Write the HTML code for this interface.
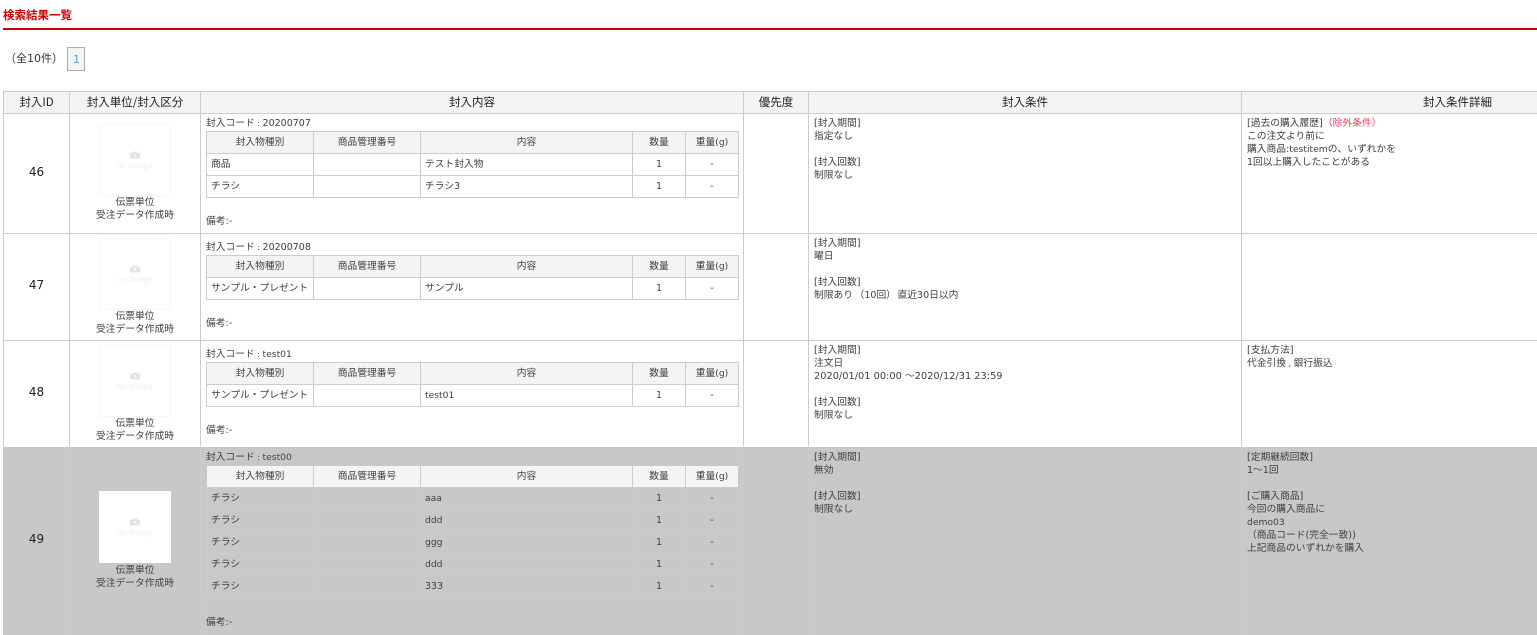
<!DOCTYPE html>
<html lang="ja">
<head>
<meta charset="utf-8">
<title>検索結果一覧</title>
<style>
html,body{margin:0;padding:0;width:1537px;height:635px;overflow:hidden;background:#fff}
body{position:relative;font-family:"DejaVu Sans","Noto Sans CJK JP",sans-serif;font-size:9.75px;line-height:13px;color:#404040}
h2{position:absolute;left:3px;top:8px;margin:0;font-size:11.5px;line-height:17px;font-weight:bold;color:#c00;font-family:"Liberation Sans","Noto Sans CJK JP",sans-serif}
.rule{position:absolute;left:3px;top:28px;width:1534px;height:2px;background:#c00}
.count{position:absolute;left:5px;top:52px;font-size:11px;line-height:14px;color:#333;white-space:nowrap}
.pg{position:absolute;left:67px;top:47px;width:15px;height:22px;padding-left:1px;border:1px solid #aaa;background:#f3f5f4;color:#5b9fd4;text-align:center;font-size:11px;line-height:23px}
table{border-collapse:separate;border-spacing:0;table-layout:fixed}
table.m{position:absolute;left:3px;top:91px;width:1671px}
.m>thead>tr>th{padding:0;box-sizing:border-box;background:#f3f5f4;border-top:1px solid #ccc;border-right:1px solid #ccc;border-bottom:1px solid #ccc;font-weight:normal;font-size:11.5px;color:#222;height:23px;font-family:"Noto Sans CJK JP",sans-serif}
.m>thead>tr>th:first-child{border-left:1px solid #ccc}
.m>tbody>tr>td{box-sizing:border-box;vertical-align:top;padding:3px 5px 3px;border-right:1px solid #ccc;border-bottom:1px solid #ccc;overflow:hidden}
.m>tbody>tr>td:first-child{border-left:1px solid #ccc}
.m>tbody>tr>td.id{text-align:center;font-size:12px;color:#222;padding-left:0;padding-right:0}
.m>tbody>tr>td.u{text-align:center;padding-left:0;padding-right:0}
.m>tbody>tr>td.w{padding-top:7px}
.u svg{display:block;margin:0 auto}
.im{background:#fff;outline:1px solid #f6f6f6;outline-offset:-1px}
table.i{width:533px;margin:1px 0 17px}
.i th,.i td{box-sizing:border-box;padding:0;height:22px;border-right:1px solid #ccc;border-bottom:1px solid #ccc;font-weight:normal;font-size:9.75px;vertical-align:middle;color:#404040}
.i th{background:#f3f5f4;text-align:center;border-top:1px solid #ccc;height:23px}
.i th:first-child,.i td:first-child{border-left:1px solid #ccc}
.i td.l{padding-left:4px;white-space:nowrap}
.i td.c{text-align:center;font-size:9.5px}
.n{white-space:nowrap}
.r{color:#f04060}
.a{font-size:9.2px}
.d{font-size:9.5px}
.t{font-size:9.8px}
.k{font-size:8px}
.s{font-size:5px}
tr.e>td{border-bottom-color:#fff !important}
tr.g>td{background:#c8c8c8}
.m>tbody>tr.g>td{border-color:#cbcbcb;padding-top:4px}
tr.g .i th{background:#f3f5f4;border-color:#ccc;border-top-color:#c8c8c8}
tr.g .i th:first-child{border-left-color:#c8c8c8}
tr.g .i th:last-child{border-right-color:#c8c8c8}
tr.g .i td{border-color:#cbcbcb}
tr.g table.i{margin:1px 0 18px}
</style>
</head>
<body>
<h2>検索結果一覧</h2>
<div class="rule"></div>
<div class="count">（全10件）</div>
<div class="pg">1</div>

<svg width="0" height="0" style="position:absolute">
  <symbol id="noimg" viewBox="0 0 72 72">
    <path d="M31 29h2l1-1.500h4l1 1.500h2v5.500h-10z" fill="#e4e4e4"/>
    <circle cx="36" cy="31.300" r="1.300" fill="#f6f6f6"/>
    <text x="36" y="44" text-anchor="middle" font-family="Liberation Sans, sans-serif" font-size="8" letter-spacing=".4" fill="#eeeeee">no image</text>
  </symbol>
</svg>

<table class="m">
<colgroup><col style="width:67px"><col style="width:131px"><col style="width:543px"><col style="width:65px"><col style="width:433px"><col style="width:432px"></colgroup>
<thead>
<tr><th>封入ID</th><th>封入単位/封入区分</th><th>封入内容</th><th>優先度</th><th>封入条件</th><th>封入条件詳細</th></tr>
</thead>
<tbody>
<tr style="height:120px">
  <td class="id" style="padding-top:52px">46</td>
  <td class="u" style="padding-top:10px"><svg class="im" width="72" height="72"><use href="#noimg"/></svg>伝票単位<br>受注データ作成時</td>
  <td><div class="n">封入コード<span class="k"> : </span><span class="d">20200707</span></div>
    <table class="i"><colgroup><col style="width:108px"><col style="width:107px"><col style="width:212px"><col style="width:53px"><col style="width:53px"></colgroup>
    <tr><th>封入物種別</th><th>商品管理番号</th><th>内容</th><th>数量</th><th>重量<span class="a">(g)</span></th></tr>
    <tr><td class="l">商品</td><td></td><td class="l">テスト封入物</td><td class="c">1</td><td class="c">-</td></tr>
    <tr><td class="l">チラシ</td><td></td><td class="l">チラシ<span class="d">3</span></td><td class="c">1</td><td class="c">-</td></tr>
    </table>
    <div>備考:-</div></td>
  <td></td>
  <td>[封入期間]<br>指定なし<br><br>[封入回数]<br>制限なし</td>
  <td>[過去の購入履歴]<span class="r">（除外条件）</span><br>この注文より前に<br>購入商品:<span class="a">testitem</span>の、いずれかを<br><span class="d">1</span>回以上購入したことがある</td>
</tr>
<tr style="height:107px">
  <td class="id" style="padding-top:45px">47</td>
  <td class="u" style="padding-top:4px"><svg class="im" width="72" height="72"><use href="#noimg"/></svg>伝票単位<br>受注データ作成時</td>
  <td class="w"><div class="n">封入コード<span class="k"> : </span><span class="d">20200708</span></div>
    <table class="i"><colgroup><col style="width:108px"><col style="width:107px"><col style="width:212px"><col style="width:53px"><col style="width:53px"></colgroup>
    <tr><th>封入物種別</th><th>商品管理番号</th><th>内容</th><th>数量</th><th>重量<span class="a">(g)</span></th></tr>
    <tr><td class="l">サンプル・プレゼント</td><td></td><td class="l">サンプル</td><td class="c">1</td><td class="c">-</td></tr>
    </table>
    <div>備考:-</div></td>
  <td></td>
  <td>[封入期間]<br>曜日<br><br>[封入回数]<br>制限あり<span class="s"> </span>（<span class="d">10</span>回）<span class="s"> </span>直近<span class="d">30</span>日以内</td>
  <td></td>
</tr>
<tr class="e" style="height:106px">
  <td class="id" style="padding-top:45px">48</td>
  <td class="u" style="padding-top:4px"><svg class="im" width="72" height="72"><use href="#noimg"/></svg>伝票単位<br>受注データ作成時</td>
  <td class="w"><div class="n">封入コード<span class="k"> : </span><span class="a">test01</span></div>
    <table class="i"><colgroup><col style="width:108px"><col style="width:107px"><col style="width:212px"><col style="width:53px"><col style="width:53px"></colgroup>
    <tr><th>封入物種別</th><th>商品管理番号</th><th>内容</th><th>数量</th><th>重量<span class="a">(g)</span></th></tr>
    <tr><td class="l">サンプル・プレゼント</td><td></td><td class="l"><span class="a">test01</span></td><td class="c">1</td><td class="c">-</td></tr>
    </table>
    <div>備考:-</div></td>
  <td></td>
  <td>[封入期間]<br>注文日<br><span class="t">2020/01/01 00:00 ～2020/12/31 23:59</span><br><br>[封入回数]<br>制限なし</td>
  <td>[支払方法]<br>代金引換<span class="k"> , </span>銀行振込</td>
</tr>
<tr class="g" style="height:192px">
  <td class="id" style="padding-top:86px">49</td>
  <td class="u" style="padding-top:44px"><svg width="72" height="72" style="background:#fff;margin-bottom:1px"><use href="#noimg"/></svg>伝票単位<br>受注データ作成時</td>
  <td><div class="n">封入コード<span class="k"> : </span><span class="a">test00</span></div>
    <table class="i"><colgroup><col style="width:108px"><col style="width:107px"><col style="width:212px"><col style="width:53px"><col style="width:53px"></colgroup>
    <tr><th>封入物種別</th><th>商品管理番号</th><th>内容</th><th>数量</th><th>重量<span class="a">(g)</span></th></tr>
    <tr><td class="l">チラシ</td><td></td><td class="l"><span class="a">aaa</span></td><td class="c">1</td><td class="c">-</td></tr>
    <tr><td class="l">チラシ</td><td></td><td class="l"><span class="a">ddd</span></td><td class="c">1</td><td class="c">-</td></tr>
    <tr><td class="l">チラシ</td><td></td><td class="l"><span class="a">ggg</span></td><td class="c">1</td><td class="c">-</td></tr>
    <tr><td class="l">チラシ</td><td></td><td class="l"><span class="a">ddd</span></td><td class="c">1</td><td class="c">-</td></tr>
    <tr><td class="l">チラシ</td><td></td><td class="l"><span class="d">333</span></td><td class="c">1</td><td class="c">-</td></tr>
    </table>
    <div>備考:-</div></td>
  <td></td>
  <td>[封入期間]<br>無効<br><br>[封入回数]<br>制限なし</td>
  <td>[定期継続回数]<br><span class="d">1</span>～<span class="d">1</span>回<br><br>[ご購入商品]<br>今回の購入商品に<br><span class="a">demo03</span><br>（商品コード(完全一致))<br>上記商品のいずれかを購入</td>
</tr>
</tbody>
</table>
</body>
</html>
